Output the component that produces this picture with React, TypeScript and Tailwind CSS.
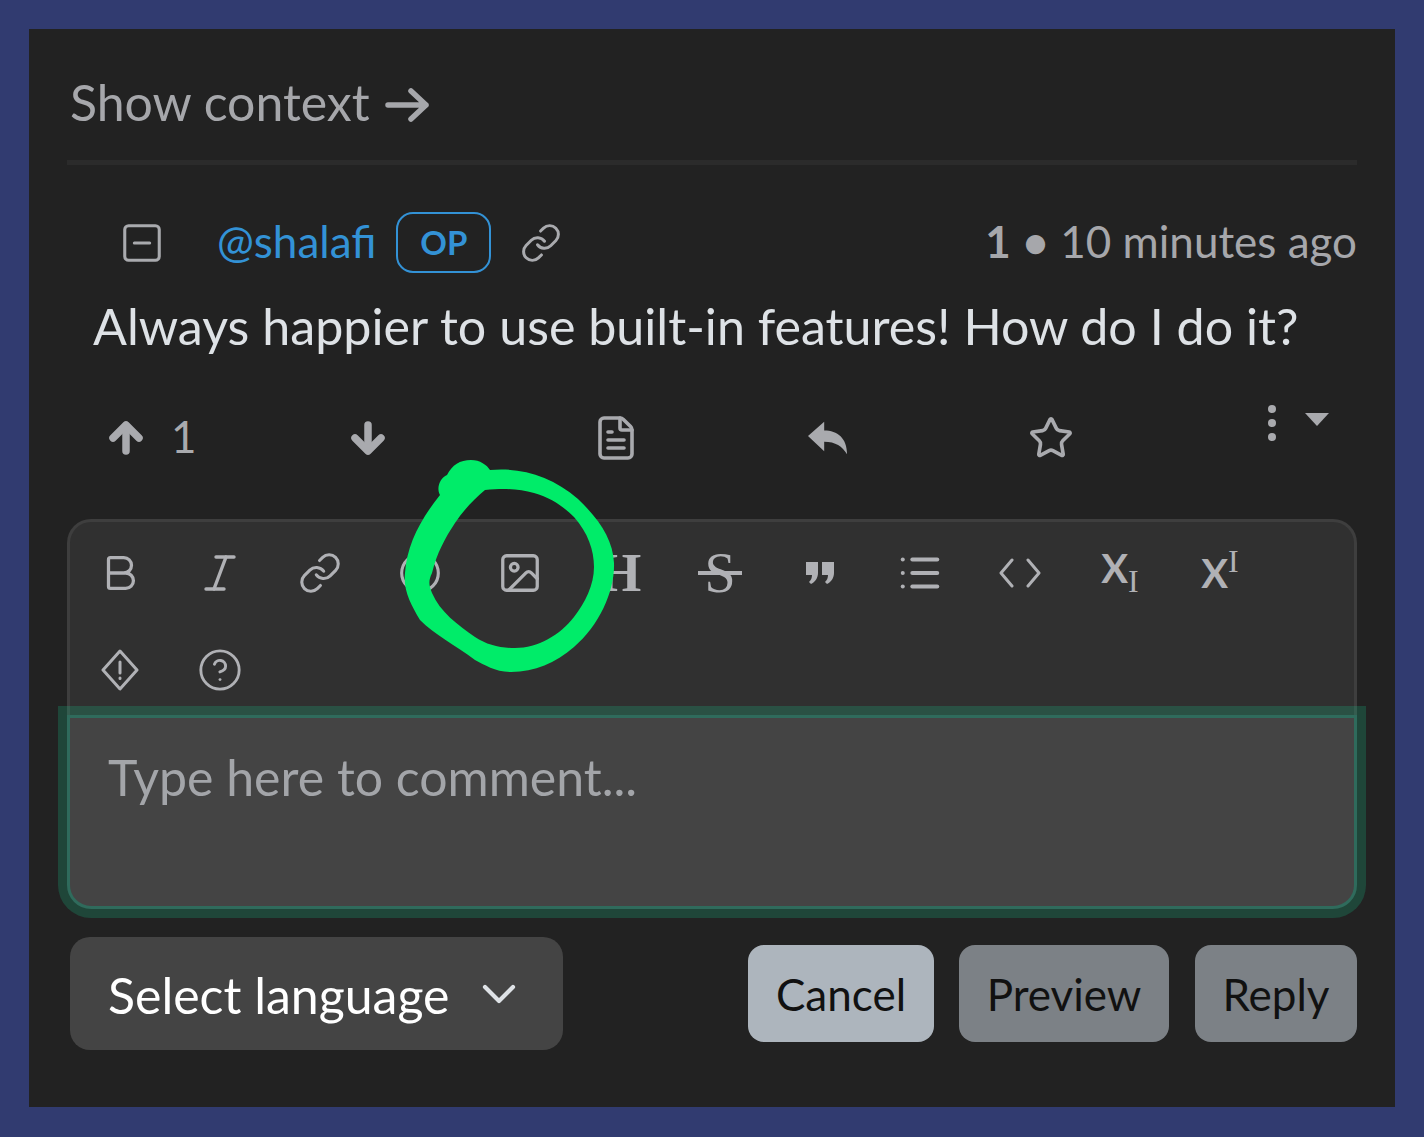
import { Bold, ChevronDown, CircleHelp, FileText, Image, Italic, Link, List, Smile, SquareMinus, Star } from "lucide-react";
import type { ReactNode } from "react";

const font = { fontFamily: "Lato, 'Noto Sans', sans-serif" };
const serif = { fontFamily: "'Liberation Serif', serif" };

function ToolButton({ children }: { children: ReactNode }) {
  return <div className="flex h-[97px] w-[100px] items-center justify-center text-[#b0b1b5]">{children}</div>;
}

function ArrowIcon({ down }: { down?: boolean }) {
  return (
    <svg width="36" height="36" viewBox="0 0 36 36" fill="none" stroke="#a9aaae" strokeWidth="7.5" strokeLinecap="round" strokeLinejoin="round" className={down ? "rotate-180" : ""}>
      <path d="M18 31V6" />
      <path d="M5 18 18 5l13 13" />
    </svg>
  );
}

function Annotation() {
  return (
    <svg className="absolute left-0 top-0" width="1424" height="1137" viewBox="0 0 1424 1137">
      <path
        fill="#00ec69"
        fillRule="evenodd"
        d="M471 460C480 460 487 465 490 470C520 467 552 476 578 499C600 520 613 540 614 563C615 590 600 625 574 647C555 663 535 672 511 672C495 672 485 665 475 660C455 645 435 635 420 620C411 605 403 590 405 573C407 545 420 520 440 495C436 488 440 478 447 475C452 465 460 460 471 460Z M485 490C505 488 520 489 534 493C552 498 565 508 574 517C588 533 594 550 594 567C594 585 585 603 574 617C560 635 538 648 515 648C500 648 487 645 475 637C458 625 440 612 432 593C428 583 429 580 432 573C437 553 445 538 455 523C463 511 473 500 485 490Z"
      />
    </svg>
  );
}

export default function App() {
  return (
    <div className="relative h-[1137px] w-[1424px] overflow-hidden bg-[#313b70] pb-[30px] pl-[29px] pr-[29px] pt-[29px]" style={font}>
      <div className="h-[1078px] bg-[#222222] px-[38px]">
        <div className="flex h-[136px] items-center border-b-[5px] border-[#2b2b2b] pl-[3px] pt-[16px] text-[50px] text-[#a6a7ab]">
          Show context
          <svg width="44" height="34" viewBox="0 0 44 34" fill="none" stroke="#a6a7ab" strokeWidth="5.5" strokeLinecap="round" strokeLinejoin="round" className="ml-[15px] mt-[4px]">
            <path d="M3 17h38M26 3l15 14-15 14" />
          </svg>
        </div>

        <div className="mt-[47px] flex h-[61px] items-center">
          <SquareMinus size={46} strokeWidth={1.6} className="ml-[52px] text-[#a9aaae]" />
          <span className="ml-[52px] mt-[-4px] text-[44px] text-[#3392d6]">@shalafi</span>
          <span className="ml-[20px] flex h-[61px] w-[95px] items-center justify-center rounded-[17px] border-[2.5px] border-[#3392d6] text-[33px] font-bold text-[#3392d6]">OP</span>
          <Link size={42} strokeWidth={1.7} className="ml-[29px] text-[#a9aaae]" />
          <span className="ml-auto mt-[-4px] text-[44px] text-[#a6a7ab]">
            <span className="font-bold">1</span>
            <span className="mx-[12px] font-bold">•</span>
            10 minutes ago
          </span>
        </div>

        <p className="ml-[26px] mt-[21px] h-[64px] text-[50.2px] leading-[64px] text-[#dee2e6]">Always happier to use built-in features! How do I do it?</p>

        <div className="mt-[40px] flex h-[80px] items-center text-[#a9aaae]">
          <div className="ml-[41px] flex w-[242px] items-center gap-[27px]">
            <ArrowIcon />
            <span className="mt-[-4px] text-[44px] leading-none">1</span>
          </div>
          <ArrowIcon down />
          <FileText size={48} strokeWidth={1.8} className="ml-[206px]" />
          <svg width="40" height="36" viewBox="0 0 42 36" fill="#a9aaae" className="ml-[168px]">
            <path d="M0 16 17 1v9c14 0 24 8 24 25-5-8-12-13-24-13v10z" />
          </svg>
          <Star size={46} strokeWidth={1.9} className="ml-[180px]" />
          <svg width="12" height="36" viewBox="0 0 12 36" fill="#a9aaae" className="ml-[192px] mt-[-30px]">
            <circle cx="6" cy="4" r="4" />
            <circle cx="6" cy="18" r="4" />
            <circle cx="6" cy="32" r="4" />
          </svg>
          <svg width="24" height="14" viewBox="0 0 24 14" fill="#a9aaae" className="ml-[27px] mt-[-36px]">
            <path d="M0 0h24L12 13z" />
          </svg>
        </div>

        <div className="mt-[41px] flex h-[196px] flex-wrap content-start rounded-t-[24px] border-x-[3px] border-t-[3px] border-[#3e3e3e] bg-[#303030] pt-[2px]">
          <ToolButton><Bold size={46} strokeWidth={1.7} /></ToolButton>
          <ToolButton><Italic size={48} strokeWidth={1.7} /></ToolButton>
          <ToolButton><Link size={44} strokeWidth={1.7} /></ToolButton>
          <ToolButton><Smile size={44} strokeWidth={1.7} /></ToolButton>
          <ToolButton><Image size={46} strokeWidth={1.7} /></ToolButton>
          <ToolButton><span className="text-[55px] font-bold leading-none" style={serif}>H</span></ToolButton>
          <ToolButton>
            <span className="relative w-[44px] text-center text-[56px] leading-none" style={serif}>
              S<span className="absolute left-0 top-[26px] h-[4px] w-[44px] bg-[#b0b1b5]" />
            </span>
          </ToolButton>
          <ToolButton>
            <svg width="28" height="22" viewBox="0 0 28 22" fill="#b0b1b5">
              <path d="M0 0h12v11c0 5-3 9-7 11l-2-2c2-2 3-4 3-7H0z M16 0h12v11c0 5-3 9-7 11l-2-2c2-2 3-4 3-7h-6z" />
            </svg>
          </ToolButton>
          <ToolButton><List size={46} strokeWidth={2.1} /></ToolButton>
          <ToolButton>
            <svg width="42" height="30" viewBox="0 0 42 30" fill="none" stroke="#b0b1b5" strokeWidth="3" strokeLinecap="round" strokeLinejoin="round">
              <path d="M13 2 2 15l11 13M29 2l11 13-11 13" />
            </svg>
          </ToolButton>
          <ToolButton>
            <span className="flex items-start">
              <span className="text-[40px] font-bold leading-none">X</span>
              <span className="mt-[17px] text-[32px] leading-none" style={serif}>I</span>
            </span>
          </ToolButton>
          <ToolButton>
            <span className="flex items-start">
              <span className="text-[40px] font-bold leading-none">X</span>
              <span className="mt-[-8px] text-[32px] leading-none" style={serif}>I</span>
            </span>
          </ToolButton>
          <ToolButton>
            <svg width="38" height="46" viewBox="0 0 38 46" fill="none" stroke="#b0b1b5" strokeWidth="3" strokeLinecap="round" strokeLinejoin="round">
              <path d="M19 4 36 23 19 42 2 23z" />
              <path d="M19 15v11M19 31v.5" />
            </svg>
          </ToolButton>
          <ToolButton><CircleHelp size={46} strokeWidth={1.5} /></ToolButton>
        </div>

        <div className="relative h-[194px] rounded-b-[24px] border-[3px] border-[#2f6b5c] bg-[#444444] pl-[38px] pt-[29px] text-[50px] leading-[60px] text-[#a3a5a9] shadow-[0_0_0_9px_rgba(25,200,140,0.22)]">
          Type here to comment...
        </div>

        <div className="mt-[28px] flex items-center">
          <div className="ml-[3px] flex h-[113px] w-[493px] items-center rounded-[20px] bg-[#444444] pl-[38px] text-[50px] text-white">
            <span className="pt-[4px]">Select language</span>
            <ChevronDown size={56} strokeWidth={1.8} className="ml-[22px] text-[#dee2e6]" />
          </div>
          <button className="ml-auto h-[97px] w-[186px] rounded-[16px] bg-[#adb5bd] text-[44px] text-[#111111]">Cancel</button>
          <button className="ml-[25px] h-[97px] w-[210px] rounded-[16px] bg-[#7c8186] text-[44px] text-[#111111]">Preview</button>
          <button className="ml-[26px] h-[97px] w-[162px] rounded-[16px] bg-[#7c8186] text-[44px] text-[#111111]">Reply</button>
        </div>
      </div>
      <Annotation />
    </div>
  );
}
